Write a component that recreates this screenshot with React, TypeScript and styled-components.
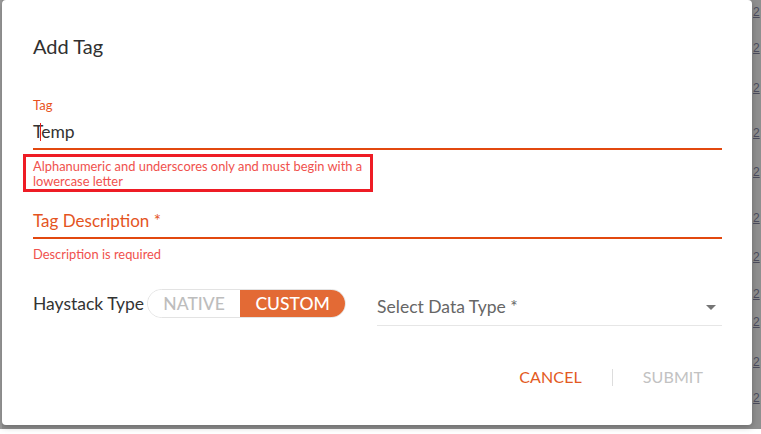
import React from "react";
import styled, { createGlobalStyle } from "styled-components";

const Global = createGlobalStyle`
  html, body { margin: 0; padding: 0; background: #ffffff; }
  body { font-family: Lato, "Open Sans", Arial, sans-serif; }
  * { box-sizing: border-box; }
`;

const Page = styled.div`
  width: 761px;
  height: 434px;
  overflow: hidden;
  background: #ffffff;
`;

const Backdrop = styled.div`
  height: 429px;
  display: flex;
  background: #8f8f8f;
`;

const LeftStrip = styled.div`
  width: 2px;
  flex: none;
  background: #9c9c9c;
`;

const RightStrip = styled.div`
  flex: 1;
  overflow: hidden;
  display: flex;
  flex-direction: column;
  padding-left: 1px;
  color: #4a4a5a;
  font-family: "Liberation Sans", Arial, sans-serif;
  font-size: 12px;
  line-height: 14px;
`;

const Digit = styled.div<{ $gap: number }>`
  margin-top: ${(p) => p.$gap}px;
  text-decoration: underline;
`;

const Dialog = styled.div`
  width: 750px;
  height: 425px;
  flex: none;
  background: #ffffff;
  border-radius: 4px;
  box-shadow: 0 2px 6px rgba(0, 0, 0, 0.25);
  padding: 0 30px 0 31px;
  display: flex;
  flex-direction: column;
`;

const Title = styled.h2`
  margin: 33px 0 0;
  font-size: 20px;
  line-height: 26px;
  font-weight: 400;
  color: #303030;
`;

const Field = styled.div<{ $top: number }>`
  margin-top: ${(p) => p.$top}px;
  display: flex;
  flex-direction: column;
`;

const Label = styled.label`
  font-size: 13px;
  line-height: 16px;
  color: #e8531f;
`;

const InputLine = styled.div<{ $h: number }>`
  height: ${(p) => p.$h}px;
  border-bottom: 2px solid #e2480f;
  display: flex;
  align-items: flex-end;
  padding-bottom: 6px;
  font-size: 17.5px;
  line-height: 20px;
  color: #333333;
`;

const InputValue = styled.span`
  position: relative;
`;

const Caret = styled.span`
  position: absolute;
  left: 7px;
  top: 1px;
  width: 1px;
  height: 18px;
  background: #e8201c;
`;

const PlaceholderText = styled.span`
  font-size: 17px;
  color: #e4541e;
`;

const ErrorBox = styled.div<{ $boxed?: boolean }>`
  margin-top: ${(p) => (p.$boxed ? "4px" : "8px")};
  margin-left: ${(p) => (p.$boxed ? "-10px" : "0")};
  width: ${(p) => (p.$boxed ? "350px" : "auto")};
  padding: ${(p) => (p.$boxed ? "2px 0 0 7px" : "0")};
  border: ${(p) => (p.$boxed ? "3px solid #ee1c25" : "none")};
  font-size: 12.9px;
  line-height: 15px;
  color: #f0514d;
`;

const Row = styled.div`
  margin-top: 27px;
  display: flex;
  align-items: flex-start;
`;

const RowLabel = styled.span`
  height: 29px;
  display: flex;
  align-items: center;
  font-size: 17.5px;
  color: #333333;
  margin-right: 3px;
`;

const Toggle = styled.div`
  display: flex;
  height: 29px;
  border: 1px solid #e3e3e3;
  border-radius: 15px;
  overflow: hidden;
`;

const Segment = styled.div<{ $active?: boolean; $w: number }>`
  width: ${(p) => p.$w}px;
  display: flex;
  align-items: center;
  justify-content: center;
  font-size: 17.5px;
  font-weight: 500;
  color: ${(p) => (p.$active ? "#ffffff" : "#bdbdbd")};
  background: ${(p) => (p.$active ? "#e36a35" : "#ffffff")};
`;

const Select = styled.div`
  flex: 1;
  margin-left: 31px;
  margin-top: 8px;
  height: 29px;
  border-bottom: 1px solid #e6e6e6;
  display: flex;
  align-items: flex-start;
  justify-content: space-between;
  padding-right: 6px;
  font-size: 17.5px;
  line-height: 20px;
  color: #666666;
`;

const Arrow = styled.svg`
  margin-top: 8px;
`;

const Actions = styled.div`
  margin-top: 41px;
  display: flex;
  justify-content: flex-end;
  align-items: center;
  padding-right: 19px;
`;

const ActionButton = styled.button<{ $disabled?: boolean }>`
  background: none;
  border: none;
  padding: 0;
  font-family: inherit;
  font-size: 16px;
  line-height: 20px;
  letter-spacing: 0.1px;
  color: ${(p) => (p.$disabled ? "#c2c2c2" : "#e35a22")};
`;

const Divider = styled.span`
  width: 1px;
  height: 17px;
  background: #dddddd;
  margin: 0 30px 0 30px;
`;

const digitGaps = [5, 22, 26, 31, 25, 32, 25, 23, 14, 26, 22];

export default function App() {
  return (
    <Page>
      <Global />
      <Backdrop>
        <LeftStrip />
        <Dialog>
          <Title>Add Tag</Title>
          <Field $top={38}>
            <Label>Tag</Label>
            <InputLine $h={37}>
              <InputValue>
                Temp
                <Caret />
              </InputValue>
            </InputLine>
          </Field>
          <ErrorBox $boxed>
            Alphanumeric and underscores only and must begin with a lowercase letter
          </ErrorBox>
          <Field $top={12}>
            <InputLine $h={35}>
              <PlaceholderText>Tag Description *</PlaceholderText>
            </InputLine>
          </Field>
          <ErrorBox>Description is required</ErrorBox>
          <Row>
            <RowLabel>Haystack Type</RowLabel>
            <Toggle>
              <Segment $w={92}>NATIVE</Segment>
              <Segment $w={105} $active>
                CUSTOM
              </Segment>
            </Toggle>
            <Select>
              <span>Select Data Type *</span>
              <Arrow width="10" height="5" viewBox="0 0 10 5">
                <path d="M0 0 L10 0 L5 5 Z" fill="#757575" />
              </Arrow>
            </Select>
          </Row>
          <Actions>
            <ActionButton>CANCEL</ActionButton>
            <Divider />
            <ActionButton $disabled>SUBMIT</ActionButton>
          </Actions>
        </Dialog>
        <RightStrip>
          {digitGaps.map((g, i) => (
            <Digit key={i} $gap={g}>
              2
            </Digit>
          ))}
        </RightStrip>
      </Backdrop>
    </Page>
  );
}
